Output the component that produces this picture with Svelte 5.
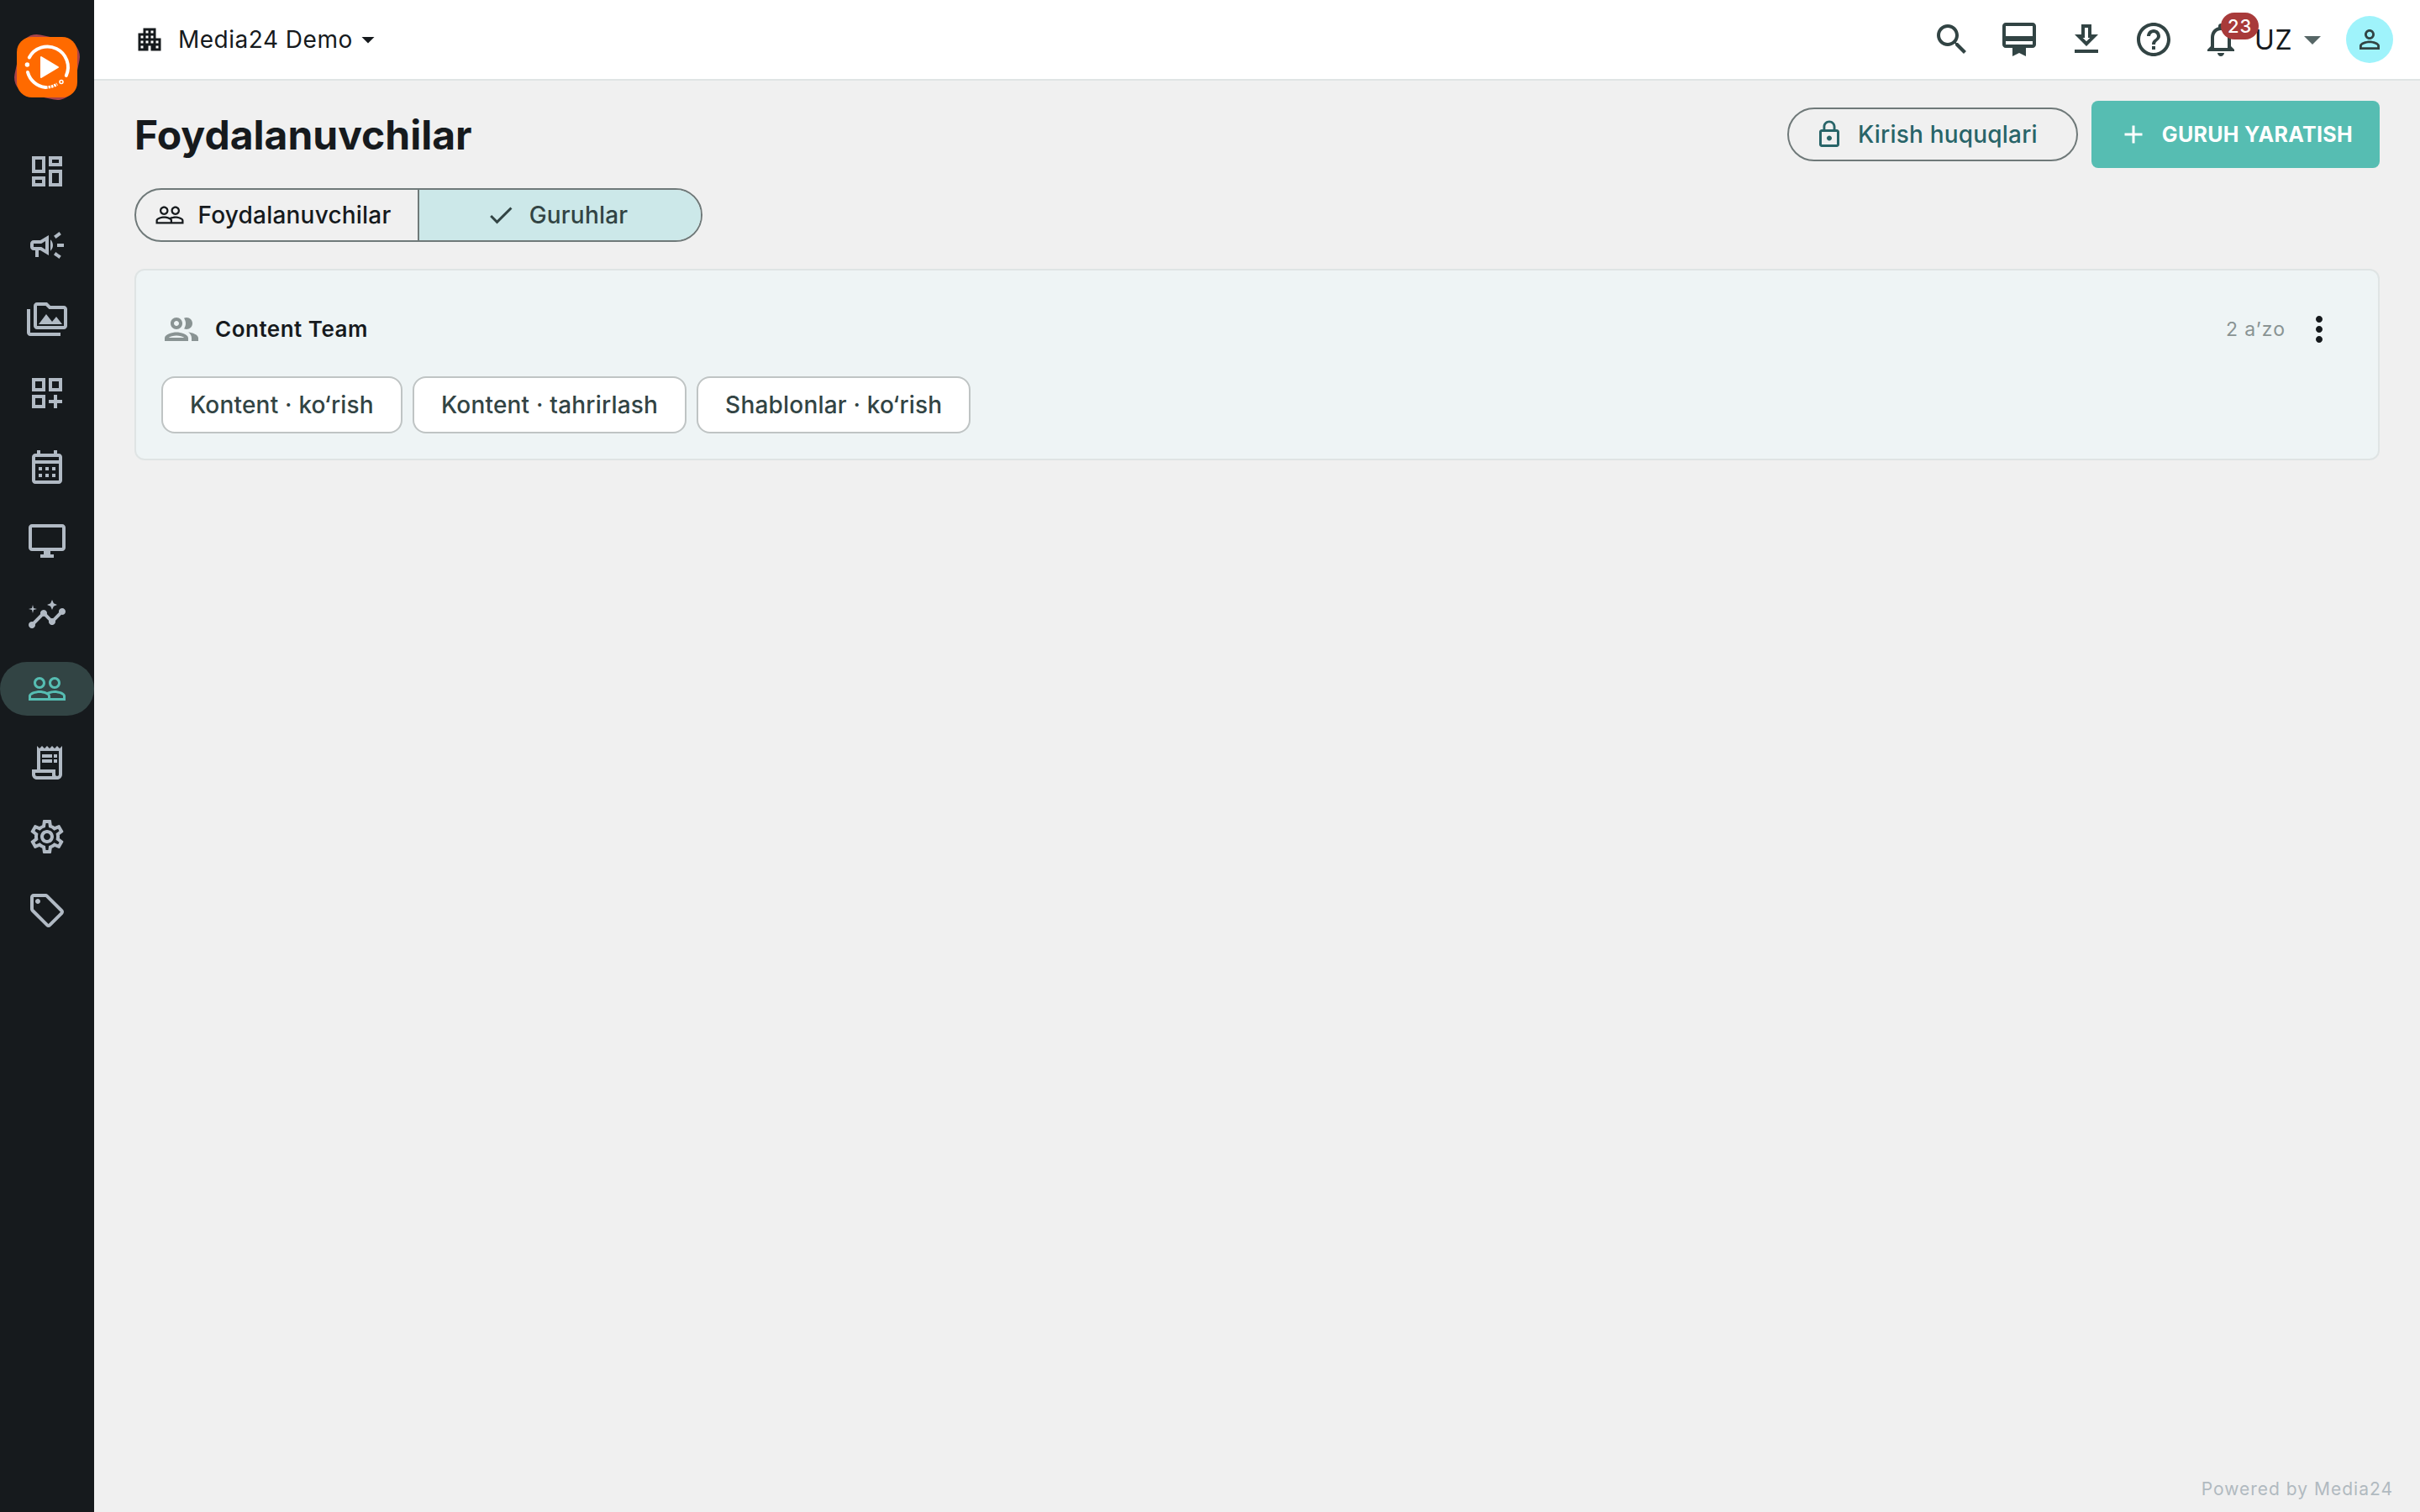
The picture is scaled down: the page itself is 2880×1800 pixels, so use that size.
<script lang="ts">
  type NavItem = { id: string; path: string };

  const navItems: NavItem[] = [
    { id: "dashboard", path: "M19 5v2h-4V5h4M9 5v6H5V5h4m10 8v6h-4v-6h4M9 17v2H5v-2h4M21 3h-8v6h8V3zM11 3H3v10h8V3zm10 8h-8v10h8V11zm-10 4H3v6h8v-6z" },
    { id: "campaigns", path: "M18 11v2h4v-2h-4zM16 17.61c.96.71 2.21 1.65 3.2 2.39.4-.53.8-1.07 1.2-1.6-.99-.74-2.24-1.68-3.2-2.4-.4.54-.8 1.08-1.2 1.61zM20.4 5.6c-.4-.53-.8-1.07-1.2-1.6-.99.74-2.24 1.68-3.2 2.4.4.53.8 1.07 1.2 1.6.96-.72 2.21-1.65 3.2-2.4zM4 9c-1.1 0-2 .9-2 2v2c0 1.1.9 2 2 2h1v4h2v-4h1l5 3V6L8 9H4zm5.03 1.71L11 9.53v4.94l-1.97-1.18-.48-.29H4v-2h4.55l.48-.29zM15.5 12c0-1.33-.58-2.53-1.5-3.35v6.69c.92-.81 1.5-2.01 1.5-3.34z" },
    { id: "media", path: "M2 6H0v5h.01L0 20c0 1.1.9 2 2 2h18v-2H2V6zm5 9h14l-3.5-4.5-2.5 3.01L11.5 9zM22 4h-8l-2-2H6c-1.1 0-1.99.9-1.99 2L4 16c0 1.1.9 2 2 2h16c1.1 0 2-.9 2-2V6c0-1.1-.9-2-2-2zm0 12H6V4h5.17l1.41 1.41.59.59H22v10z" },
    { id: "templates", path: "M3 11h8V3H3v8zm2-6h4v4H5V5zM13 3v8h8V3h-8zm6 6h-4V5h4v4zM3 21h8v-8H3v8zm2-6h4v4H5v-4zM18 13h-2v3h-3v2h3v3h2v-3h3v-2h-3z" },
    { id: "schedule", path: "M19 4h-1V2h-2v2H8V2H6v2H5c-1.11 0-1.99.9-1.99 2L3 20c0 1.1.89 2 2 2h14c1.1 0 2-.9 2-2V6c0-1.1-.9-2-2-2zm0 16H5V10h14v10zm0-12H5V6h14v2zM9 14H7v-2h2v2zm4 0h-2v-2h2v2zm4 0h-2v-2h2v2zm-8 4H7v-2h2v2zm4 0h-2v-2h2v2zm4 0h-2v-2h2v2z" },
    { id: "screens", path: "M21 2H3c-1.1 0-2 .9-2 2v12c0 1.1.9 2 2 2h7v2H8v2h8v-2h-2v-2h7c1.1 0 2-.9 2-2V4c0-1.1-.9-2-2-2zm0 14H3V4h18v12z" },
    { id: "insights", path: "M21 8c-1.45 0-2.26 1.44-1.93 2.51l-3.55 3.56c-.3-.09-.74-.09-1.04 0l-2.55-2.55C12.27 10.45 11.46 9 10 9c-1.45 0-2.27 1.44-1.93 2.52l-4.56 4.55C2.44 15.74 1 16.55 1 18c0 1.1.9 2 2 2 1.45 0 2.26-1.44 1.93-2.51l4.55-4.56c.3.09.74.09 1.04 0l2.55 2.55C12.73 16.55 13.54 18 15 18c1.45 0 2.27-1.44 1.93-2.52l3.56-3.55C21.56 12.26 23 11.45 23 10c0-1.1-.9-2-2-2zM15 9l.94-2.07L18 6l-2.06-.93L15 3l-.92 2.07L12 6l2.08.93zM3.5 11L4 9l2-.5L4 8l-.5-2L3 8l-2 .5L3 9z" },
    { id: "users", path: "M16.5 13c-1.2 0-3.07.34-4.5 1-1.43-.67-3.3-1-4.5-1C5.33 13 1 14.08 1 16.25V19h22v-2.75c0-2.17-4.33-3.25-6.5-3.25zm-4 4.5h-10v-1.25c0-.54 2.56-1.75 5-1.75s5 1.21 5 1.75v1.25zm9 0H14v-1.25c0-.46-.2-.86-.52-1.22.88-.3 1.96-.53 3.02-.53 2.44 0 5 1.21 5 1.75v1.25zM7.5 12c1.93 0 3.5-1.57 3.5-3.5S9.43 5 7.5 5 4 6.57 4 8.5 5.57 12 7.5 12zm0-5.5c1.1 0 2 .9 2 2s-.9 2-2 2-2-.9-2-2 .9-2 2-2zm9 5.5c1.93 0 3.5-1.57 3.5-3.5S18.43 5 16.5 5 13 6.57 13 8.5s1.57 3.5 3.5 3.5zm0-5.5c1.1 0 2 .9 2 2s-.9 2-2 2-2-.9-2-2 .9-2 2-2z" },
    { id: "billing", path: "M19.5 3.5L18 2l-1.5 1.5L15 2l-1.5 1.5L12 2l-1.5 1.5L9 2 7.5 3.5 6 2v14H3v3c0 1.66 1.34 3 3 3h12c1.66 0 3-1.34 3-3V2l-1.5 1.5zM15 20H6c-.55 0-1-.45-1-1v-1h10v2zm4-1c0 .55-.45 1-1 1s-1-.45-1-1v-3H8V5h11v14zM9 7h6v2H9zm7 0h2v2h-2zM9 10h6v2H9zm7 0h2v2h-2z" },
    { id: "settings", path: "M19.43 12.98c.04-.32.07-.64.07-.98 0-.34-.03-.66-.07-.98l2.11-1.65c.19-.15.24-.42.12-.64l-2-3.46c-.09-.16-.26-.25-.44-.25-.06 0-.12.01-.17.03l-2.49 1c-.52-.4-1.08-.73-1.69-.98l-.38-2.65C14.46 2.18 14.25 2 14 2h-4c-.25 0-.46.18-.49.42l-.38 2.65c-.61.25-1.17.59-1.69.98l-2.49-1c-.06-.02-.12-.03-.18-.03-.17 0-.34.09-.43.25l-2 3.46c-.13.22-.07.49.12.64l2.11 1.65c-.04.32-.07.65-.07.98 0 .33.03.66.07.98l-2.11 1.65c-.19.15-.24.42-.12.64l2 3.46c.09.16.26.25.44.25.06 0 .12-.01.17-.03l2.49-1c.52.4 1.08.73 1.69.98l.38 2.65c.03.24.24.42.49.42h4c.25 0 .46-.18.49-.42l.38-2.65c.61-.25 1.17-.59 1.69-.98l2.49 1c.06.02.12.03.18.03.17 0 .34-.09.43-.25l2-3.46c.12-.22.07-.49-.12-.64l-2.11-1.65zm-1.98-1.71c.04.31.05.52.05.73 0 .21-.02.43-.05.73l-.14 1.13.89.7 1.08.84-.7 1.21-1.27-.51-1.04-.42-.9.68c-.43.32-.84.56-1.25.73l-1.06.43-.16 1.13-.2 1.35h-1.4l-.19-1.35-.16-1.13-1.06-.43c-.43-.18-.83-.41-1.23-.71l-.91-.7-1.06.43-1.27.51-.7-1.21 1.08-.84.89-.7-.14-1.13c-.03-.31-.05-.54-.05-.74s.02-.43.05-.73l.14-1.13-.89-.7-1.08-.84.7-1.21 1.27.51 1.04.42.9-.68c.43-.32.84-.56 1.25-.73l1.06-.43.16-1.13.2-1.35h1.39l.19 1.35.16 1.13 1.06.43c.43.18.83.41 1.23.71l.91.7 1.06-.43 1.27-.51.7 1.21-1.07.85-.89.7.14 1.13zM12 8c-2.21 0-4 1.79-4 4s1.79 4 4 4 4-1.79 4-4-1.79-4-4-4zm0 6c-1.1 0-2-.9-2-2s.9-2 2-2 2 .9 2 2-.9 2-2 2z" },
    { id: "tags", path: "M21.41 11.41l-8.83-8.83c-.37-.37-.88-.58-1.41-.58H4c-1.1 0-2 .9-2 2v7.17c0 .53.21 1.04.59 1.41l8.83 8.83c.78.78 2.05.78 2.83 0l7.17-7.17c.78-.78.78-2.04-.01-2.83zM12.83 20L4 11.17V4h7.17L20 12.83 12.83 20zM8 6.5C8 7.33 7.33 8 6.5 8S5 7.33 5 6.5 5.67 5 6.5 5 8 5.67 8 6.5z" }
  ];

  const icons = {
    building: "M17 11V3H7v4H3v14h8v-4h2v4h8V11h-4zM7 19H5v-2h2v2zm0-4H5v-2h2v2zm0-4H5V9h2v2zm4 4H9v-2h2v2zm0-4H9V9h2v2zm0-4H9V5h2v2zm4 8h-2v-2h2v2zm0-4h-2V9h2v2zm0-4h-2V5h2v2zm4 12h-2v-2h2v2zm0-4h-2v-2h2v2z",
    search: "M15.5 14h-.79l-.28-.27C15.41 12.59 16 11.11 16 9.5 16 5.91 13.09 3 9.5 3S3 5.91 3 9.5 5.91 16 9.5 16c1.61 0 3.09-.59 4.23-1.57l.27.28v.79l5 4.99L20.49 19l-4.99-5zm-6 0C7.01 14 5 11.99 5 9.5S7.01 5 9.5 5 14 7.01 14 9.5 11.99 14 9.5 14z",
    membership: "M20 2H4c-1.11 0-2 .89-2 2v11c0 1.11.89 2 2 2h4v5l4-2 4 2v-5h4c1.11 0 2-.89 2-2V4c0-1.11-.89-2-2-2zm0 13H4v-2h16v2zm0-5H4V4h16v6z",
    download: "M19 9h-4V3H9v6H5l7 7 7-7zm-8 2V5h2v6h1.17L12 13.17 9.83 11H11zm-6 7h14v2H5z",
    help: "M11 18h2v-2h-2v2zm1-16C6.48 2 2 6.48 2 12s4.48 10 10 10 10-4.48 10-10S17.52 2 12 2zm0 18c-4.41 0-8-3.59-8-8s3.59-8 8-8 8 3.59 8 8-3.59 8-8 8zm0-14c-2.21 0-4 1.79-4 4h2c0-1.1.9-2 2-2s2 .9 2 2c0 2-3 1.75-3 5h2c0-2.25 3-2.5 3-5 0-2.21-1.79-4-4-4z",
    bell: "M12 22c1.1 0 2-.9 2-2h-4c0 1.1.9 2 2 2zm6-6v-5c0-3.07-1.63-5.64-4.5-6.32V4c0-.83-.67-1.5-1.5-1.5s-1.5.67-1.5 1.5v.68C7.64 5.36 6 7.92 6 11v5l-2 2v1h16v-1l-2-2zm-2 1H8v-6c0-2.48 1.51-4.5 4-4.5s4 2.02 4 4.5v6z",
    arrow: "M7 10l5 5 5-5z",
    person: "M12 5.9c1.16 0 2.1.94 2.1 2.1s-.94 2.1-2.1 2.1S9.9 9.16 9.9 8s.94-2.1 2.1-2.1m0 9c2.97 0 6.1 1.46 6.1 2.1v1.1H5.9V17c0-.64 3.13-2.1 6.1-2.1M12 4C9.79 4 8 5.79 8 8s1.79 4 4 4 4-1.79 4-4-1.79-4-4-4zm0 9c-2.67 0-8 1.34-8 4v3h16v-3c0-2.66-5.33-4-8-4z",
    lock: "M12 17c1.1 0 2-.9 2-2s-.9-2-2-2-2 .9-2 2 .9 2 2 2zm6-9h-1V6c0-2.76-2.24-5-5-5S7 3.24 7 6v2H6c-1.1 0-2 .9-2 2v10c0 1.1.9 2 2 2h12c1.1 0 2-.9 2-2V10c0-1.1-.9-2-2-2zM8.9 6c0-1.71 1.39-3.1 3.1-3.1s3.1 1.39 3.1 3.1v2H8.9V6zM18 20H6V10h12v10z",
    plus: "M19 13h-6v6h-2v-6H5v-2h6V5h2v6h6v2z",
    check: "M9 16.17L4.83 12l-1.42 1.41L9 19 21 7l-1.41-1.41z",
    group: "M9 13.75c-2.34 0-7 1.17-7 3.5V19h14v-1.75c0-2.33-4.66-3.5-7-3.5zM4.34 17c.84-.58 2.87-1.25 4.66-1.25s3.82.67 4.66 1.25H4.34zM9 12c1.93 0 3.5-1.57 3.5-3.5S10.93 5 9 5 5.5 6.57 5.5 8.5 7.07 12 9 12zm0-5c.83 0 1.5.67 1.5 1.5S9.83 10 9 10s-1.5-.67-1.5-1.5S8.17 7 9 7zm7.04 6.81c1.16.84 1.96 1.96 1.96 3.44V19h4v-1.75c0-2.02-3.5-3.17-5.96-3.44zM15 12c1.93 0 3.5-1.57 3.5-3.5S16.93 5 15 5c-.54 0-1.04.13-1.5.35.63.89 1 1.98 1 3.15s-.37 2.26-1 3.15c.46.22.96.35 1.5.35z",
    more: "M12 8c1.1 0 2-.9 2-2s-.9-2-2-2-2 .9-2 2 .9 2 2 2zm0 2c-1.1 0-2 .9-2 2s.9 2 2 2 2-.9 2-2-.9-2-2-2zm0 6c-1.1 0-2 .9-2 2s.9 2 2 2 2-.9 2-2-.9-2-2-2z"
  };

  const usersPath = navItems[7].path;
  const actions = [icons.search, icons.membership, icons.download, icons.help];
  const permissions = ["Kontent · ko‘rish", "Kontent · tahrirlash", "Shablonlar · ko‘rish"];

  let active = $state("users");
</script>

{#snippet icon(path: string, size: number)}
  <svg width={size} height={size} viewBox="0 0 24 24" fill="currentColor" aria-hidden="true">
    <path d={path} />
  </svg>
{/snippet}

<div class="app">
  <aside class="sidebar">
    <svg class="logo" width="80" height="80" viewBox="0 0 80 80" aria-hidden="true">
      <rect x="4" y="4" width="72" height="72" rx="20" fill="#a8434a" transform="rotate(12 40 40)" />
      <rect x="4" y="4" width="72" height="72" rx="18" fill="#ff6a00" />
      <g fill="none" stroke="#fff" stroke-width="4" stroke-linecap="round">
        <path d="M18.8 28.5A24.5 24.5 0 0 1 62.8 50" />
        <path d="M17 46A24.5 24.5 0 0 0 38 64" />
      </g>
      <path d="M38 64q8 0 14-4" fill="none" stroke="#fff" stroke-width="3.5" stroke-dasharray="2.5 1" />
      <circle cx="57" cy="57.5" r="2" fill="none" stroke="#fff" stroke-width="1.5" />
      <circle cx="16.4" cy="37" r="2.7" fill="#fff" />
      <path d="M33 28v24l20-12z" fill="#fff" stroke="#fff" stroke-width="2" stroke-linejoin="round" />
    </svg>
    <nav>
      {#each navItems as item (item.id)}
        <button class="nav-item" class:active={active === item.id} aria-label={item.id} onclick={() => (active = item.id)}>
          {@render icon(item.path, 48)}
        </button>
      {/each}
    </nav>
  </aside>

  <div class="page">
    <header class="topbar">
      <button class="workspace">
        {@render icon(icons.building, 36)}
        <span>Media24 Demo</span>
        {@render icon(icons.arrow, 36)}
      </button>

      <div class="tools">
        {#each actions as path}
          <button class="tool" aria-label="tool">{@render icon(path, 48)}</button>
        {/each}
        <button class="tool" aria-label="notifications">
          {@render icon(icons.bell, 48)}
          <span class="badge">23</span>
        </button>
        <button class="language">
          <span>UZ</span>
          {@render icon(icons.arrow, 48)}
        </button>
        <button class="avatar" aria-label="profile">{@render icon(icons.person, 36)}</button>
      </div>
    </header>

    <main>
      <div class="heading">
        <h1>Foydalanuvchilar</h1>
        <div class="heading-actions">
          <button class="outlined">{@render icon(icons.lock, 36)}<span>Kirish huquqlari</span></button>
          <button class="filled">{@render icon(icons.plus, 36)}<span>GURUH YARATISH</span></button>
        </div>
      </div>

      <div class="segments">
        <button>{@render icon(usersPath, 36)}<span>Foydalanuvchilar</span></button>
        <button class="selected">{@render icon(icons.check, 36)}<span>Guruhlar</span></button>
      </div>

      <section class="card">
        <div class="card-head">
          <span class="group-icon">{@render icon(icons.group, 48)}</span>
          <h2>Content Team</h2>
          <span class="members">2 aʼzo</span>
          <button class="more" aria-label="more">{@render icon(icons.more, 48)}</button>
        </div>
        <div class="chips">
          {#each permissions as permission}
            <span class="chip">{permission}</span>
          {/each}
        </div>
      </section>
    </main>

    <footer>Powered by Media24</footer>
  </div>
</div>

<style>
  :global(body) {
    margin: 0;
  }

  .app {
    display: flex;
    height: 100vh;
    overflow: hidden;
    background: #f0f0f0;
    color: #161a1d;
    font-family: Inter, "Liberation Sans", sans-serif;
  }

  button {
    display: flex;
    align-items: center;
    box-sizing: border-box;
    padding: 0;
    border: 0;
    background: none;
    color: inherit;
    font: inherit;
    letter-spacing: inherit;
    white-space: nowrap;
  }

  svg {
    display: block;
    flex: none;
  }

  .sidebar {
    flex: none;
    width: 112px;
    background: #161a1d;
  }

  .logo {
    margin: 40px 16px 52px;
    overflow: visible;
  }

  nav {
    display: grid;
    gap: 24px;
  }

  .nav-item {
    justify-content: center;
    width: 112px;
    height: 64px;
    border-radius: 32px;
    color: #b1bac4;
  }

  .nav-item.active {
    background: #324444;
    color: #56bdb2;
  }

  .page {
    flex: 1;
    min-width: 0;
    display: flex;
    flex-direction: column;
  }

  .topbar {
    display: flex;
    align-items: center;
    justify-content: space-between;
    height: 94px;
    padding: 0 32px 0 48px;
    border-bottom: 2px solid #e0e4e4;
    background: #fff;
  }

  .workspace {
    font-size: 28px;
    letter-spacing: 0.5px;
  }

  .workspace span {
    margin-left: 16px;
  }

  .tools {
    display: flex;
    align-items: center;
    color: #324444;
  }

  .tool {
    position: relative;
    justify-content: center;
    width: 80px;
    height: 80px;
  }

  .badge {
    position: absolute;
    top: 8px;
    left: 40px;
    width: 45px;
    height: 32px;
    border-radius: 16px;
    background: #a83a3a;
    color: #fff;
    font-size: 22px;
    font-weight: 500;
    line-height: 32px;
    letter-spacing: 1px;
    text-align: center;
  }

  .language {
    color: #566666;
    font-size: 32px;
    letter-spacing: 0.5px;
  }

  .language span {
    color: #161a1d;
  }

  .avatar {
    justify-content: center;
    width: 56px;
    height: 56px;
    margin-left: 16px;
    border-radius: 50%;
    background: #9ff3fb;
  }

  main {
    flex: 1;
    padding: 24px 48px;
  }

  .heading {
    display: flex;
    align-items: center;
    justify-content: space-between;
    height: 80px;
  }

  h1,
  h2 {
    margin: 0;
  }

  h1 {
    font-size: 48px;
    font-weight: 700;
  }

  .heading-actions {
    display: flex;
    align-items: center;
    gap: 16px;
  }

  .outlined {
    height: 64px;
    gap: 16px;
    padding: 0 46px 0 30px;
    border: 2px solid #6f7979;
    border-radius: 32px;
    color: #286468;
    font-size: 28px;
    font-weight: 500;
    letter-spacing: 0.2px;
  }

  .filled {
    height: 80px;
    gap: 16px;
    padding: 0 32px;
    border-radius: 8px;
    background: #56bdb2;
    color: #fff;
    font-size: 25px;
    font-weight: 700;
    letter-spacing: 0.3px;
  }

  .segments {
    display: grid;
    grid-template-columns: 335px 1fr;
    box-sizing: border-box;
    width: 676px;
    height: 64px;
    margin: 24px 0 32px;
    overflow: hidden;
    border: 2px solid #6f7979;
    border-radius: 32px;
    font-size: 28px;
    font-weight: 500;
    letter-spacing: 0.2px;
  }

  .segments button {
    justify-content: center;
    gap: 16px;
    padding-right: 10px;
  }

  .segments .selected {
    padding-right: 8px;
    border-left: 2px solid #6f7979;
    background: #cce8e9;
    color: #324444;
  }

  .card {
    box-sizing: border-box;
    height: 228px;
    padding: 22px 30px 30px;
    border: 2px solid #dfe4e4;
    border-radius: 12px;
    background: #eef4f5;
  }

  .card-head {
    display: flex;
    align-items: center;
    height: 96px;
  }

  .group-icon {
    color: #899393;
  }

  h2 {
    flex: 1;
    margin-left: 16px;
    font-size: 26px;
    font-weight: 600;
    line-height: 32px;
    letter-spacing: 0.5px;
  }

  .members {
    color: #899393;
    font-size: 23px;
    letter-spacing: 1px;
  }

  .more {
    justify-content: center;
    width: 80px;
    height: 80px;
  }

  .chips {
    display: flex;
    gap: 12px;
    margin-top: 8px;
  }

  .chip {
    box-sizing: border-box;
    height: 68px;
    padding: 0 32px;
    border: 2px solid #bfc4c4;
    border-radius: 16px;
    background: #fff;
    color: #324444;
    font-size: 28px;
    font-weight: 500;
    line-height: 64px;
    letter-spacing: 0.2px;
  }

  footer {
    padding: 0 32px 15px;
    color: #b1bac0;
    font-size: 21px;
    letter-spacing: 1px;
    text-align: right;
  }
</style>
